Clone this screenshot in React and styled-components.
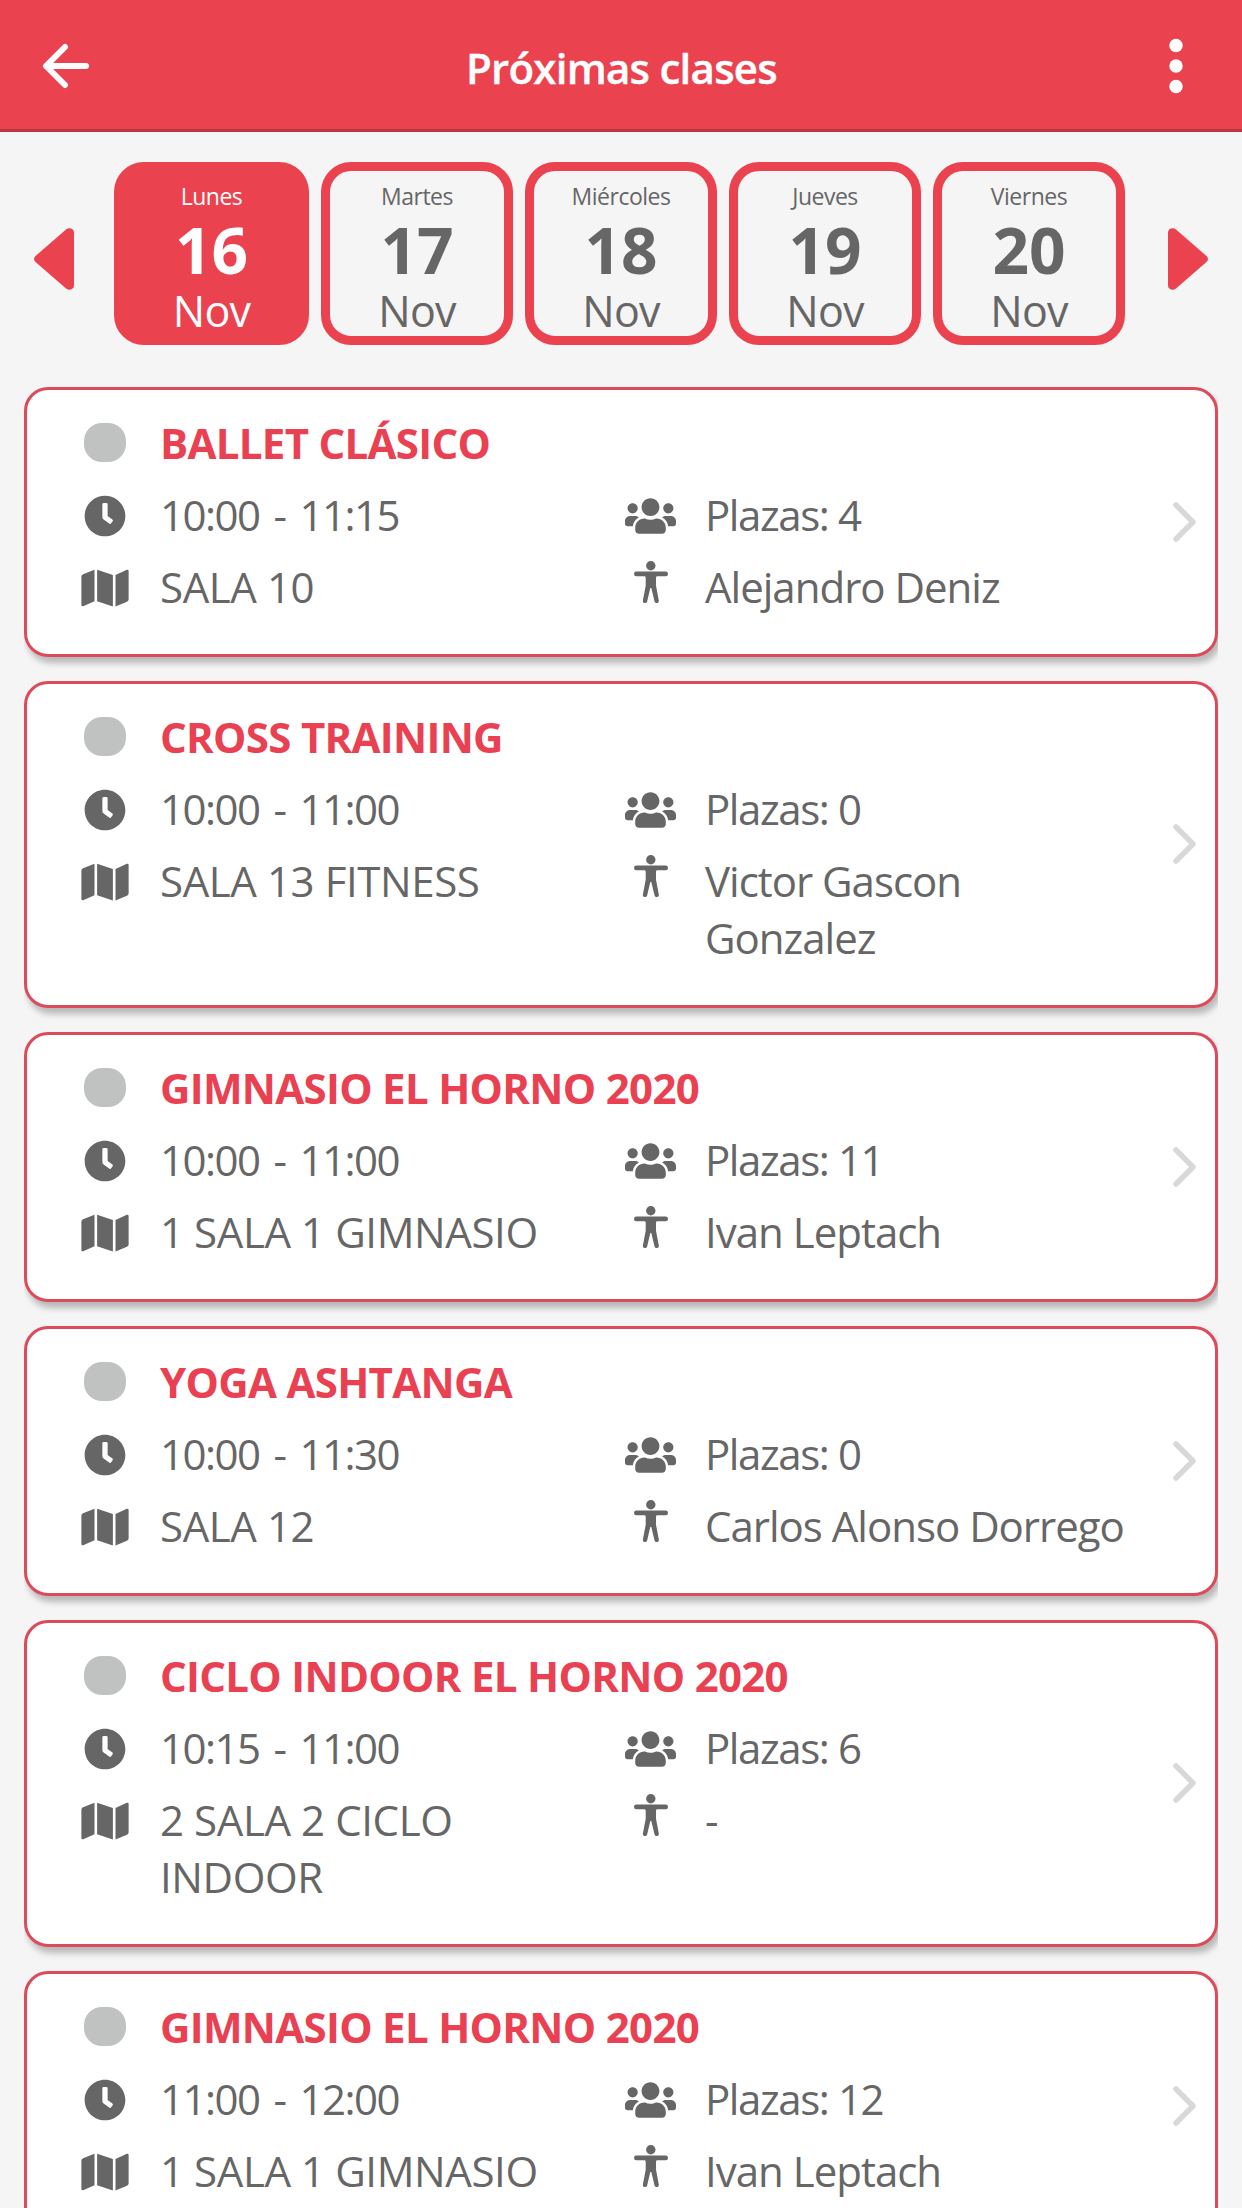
import React from 'react';
import styled, { createGlobalStyle } from 'styled-components';
import { FaClock, FaMap, FaUsers } from 'react-icons/fa';

const Global = createGlobalStyle`
  * { box-sizing: border-box; }
  body { margin: 0; background: #f5f5f5; height: 2208px; overflow: hidden; }
`;

const Screen = styled.main`
  width: 1242px;
  height: 2208px;
  overflow: hidden;
  background: #f5f5f5;
  color: #666;
  font-family: 'Open Sans', 'Noto Sans', sans-serif;
`;

const Header = styled.header`
  display: flex;
  align-items: center;
  height: 132px;
  padding: 3px 59px 0 42px;
  background: #eb4250;
  border-bottom: 3px solid #bd3443;
  color: #fff;
`;

const Title = styled.h1`
  flex: 1;
  margin: 3px 0 0;
  padding-right: 18px;
  font-size: 42px;
  font-weight: 600;
  line-height: 57px;
  letter-spacing: -0.75px;
  text-align: center;
  white-space: nowrap;
  -webkit-text-stroke: 0.4px #fff;
`;

const Week = styled.nav`
  display: flex;
  align-items: center;
  justify-content: space-between;
  height: 183px;
  margin: 30px 34px 42px;
`;

const Days = styled.div`
  display: flex;
  gap: 12px;
  height: 183px;
  padding-right: 3px;
`;

const Day = styled.button`
  display: flex;
  flex-direction: column;
  align-items: center;
  width: ${(p) => (p.$active ? 195 : 192)}px;
  height: 183px;
  padding: 7px 0 0;
  border: 9px solid #eb4250;
  border-radius: 30px;
  background: ${(p) => (p.$active ? '#eb4250' : 'transparent')};
  color: ${(p) => (p.$active ? '#fff' : '#666')};
  font-family: inherit;
`;

const DayName = styled.span`
  font-size: 23px;
  line-height: 36px;
  letter-spacing: -0.5px;
`;

const DayNumber = styled.span`
  font-size: 64px;
  font-weight: 700;
  line-height: 72px;
`;

const Month = styled.span`
  font-size: 43px;
  line-height: 50px;
  letter-spacing: -0.8px;
`;

const List = styled.section`
  display: flex;
  flex-direction: column;
  gap: 24px;
  margin: 0 24px;
  overflow-x: clip;
`;

const Card = styled.article`
  display: flex;
  align-items: center;
  justify-content: space-between;
  flex: none;
  padding: 24px 18px 39px 51px;
  border: 3px solid #dd4a5a;
  border-radius: 24px;
  background: #fff;
  box-shadow: 3px 6px 6px rgba(0, 0, 0, 0.25);
`;

const Info = styled.div`
  display: grid;
  grid-template-columns: 545px 530px;
  row-gap: 15px;
`;

const Field = styled.div`
  display: flex;
  grid-column: ${(p) => (p.$wide ? '1 / 3' : 'auto')};
`;

const IconSlot = styled.span`
  display: flex;
  align-items: center;
  justify-content: center;
  flex: none;
  width: 54px;
  height: 57px;
  margin-right: 28px;
  padding-top: ${(p) => p.$drop || 0}px;
  padding-bottom: ${(p) => p.$lift || 0}px;
  padding-left: ${(p) => p.$indent || 0}px;

  svg {
    flex: none;
    width: ${(p) => (p.$glyph ? `${p.$glyph}px` : 'auto')};
  }
`;

const Dot = styled.i`
  width: 42px;
  height: 39px;
  border-radius: 18px;
  background: #c0c2c1;
`;

const Label = styled.span`
  max-width: ${(p) => p.$max || 460}px;
  font-size: 42px;
  line-height: 57px;
  letter-spacing: ${(p) => p.$track || 0}px;
  word-spacing: ${(p) => p.$gap || 0}px;
`;

const ClassName = styled.h2`
  margin: 0;
  color: #e94151;
  font-size: 42px;
  font-weight: 700;
  line-height: 57px;
  letter-spacing: -0.7px;
`;

const ChevronIcon = styled.svg`
  flex: none;
  width: 24px;
  height: 42px;
  margin-top: 14px;
`;

const BackIcon = () => (
  <svg width="50" height="54" viewBox="0 0 50 54" fill="none" stroke="#fff" strokeWidth="6" strokeLinecap="round" strokeLinejoin="round">
    <path d="M23 8 4 27l19 19M5 27h39" />
  </svg>
);

const MoreIcon = () => (
  <svg width="14" height="66" viewBox="0 0 14 66" fill="#fff">
    <circle cx="7" cy="12.500" r="6.700" />
    <circle cx="7" cy="33" r="6.700" />
    <circle cx="7" cy="53.500" r="6.700" />
  </svg>
);

const Triangle = styled.svg`
  width: 40px;
  height: 62px;
  margin-top: 11px;
  transform: ${(p) => (p.$next ? 'scaleX(-1)' : 'none')};
`;

const WeekArrow = ({ next }) => (
  <Triangle $next={next} viewBox="0 0 40 62" fill="#eb4250">
    <path d="M40 4.500v53c0 4-5 5.500-8 3L1.500 34c-2-2-2-4 0-6L32 1.500c3-2.500 8-1 8 3Z" />
  </Triangle>
);

const BodyIcon = () => (
  <svg height="42" viewBox="0 0 34 42" fill="#666">
    <circle cx="16.800" cy="4.700" r="4.700" />
    <path d="M2.300 10.600h29.400a2.300 2.300 0 0 1 0 4.600h-8c-1.300 0-1.700.6-1.700 1.600v8l2.800 14.600c.5 3-3.700 3.700-4.300.9L17.300 27h-1l-3.100 13.300c-.6 2.800-4.800 2.100-4.300-.9L11.700 24.800v-8c0-1-.4-1.600-1.700-1.600H2.300a2.300 2.300 0 0 1 0-4.600Z" />
  </svg>
);

const Chevron = () => (
  <ChevronIcon viewBox="0 0 24 42" fill="none" stroke="#d8d8d8" strokeWidth="5.500" strokeLinecap="round" strokeLinejoin="round">
    <path d="m3 4 17 17L3 38" />
  </ChevronIcon>
);

const days = [
  ['Lunes', 16], ['Martes', 17], ['Miércoles', 18], ['Jueves', 19], ['Viernes', 20],
];

const classes = [
  { name: 'BALLET CLÁSICO', time: '10:00 - 11:15', room: 'SALA 10', places: 4, coach: 'Alejandro Deniz' },
  { name: 'CROSS TRAINING', time: '10:00 - 11:00', room: 'SALA 13 FITNESS', places: 0, coach: 'Victor Gascon Gonzalez' },
  { name: 'GIMNASIO EL HORNO 2020', time: '10:00 - 11:00', room: '1 SALA 1 GIMNASIO', places: 11, coach: 'Ivan Leptach' },
  { name: 'YOGA ASHTANGA', time: '10:00 - 11:30', room: 'SALA 12', places: 0, coach: 'Carlos Alonso Dorrego' },
  { name: 'CICLO INDOOR EL HORNO 2020', time: '10:15 - 11:00', room: '2 SALA 2 CICLO INDOOR', places: 6, coach: '-' },
  { name: 'GIMNASIO EL HORNO 2020', time: '11:00 - 12:00', room: '1 SALA 1 GIMNASIO', places: 12, coach: 'Ivan Leptach' },
];

const ClassCard = ({ item }) => (
  <Card>
    <Info>
      <Field $wide>
        <IconSlot><Dot /></IconSlot>
        <ClassName>{item.name}</ClassName>
      </Field>
      <Field>
        <IconSlot $drop={3} $glyph={42}><FaClock size={42} /></IconSlot>
        <Label $track={-1.5} $gap={4.5}>{item.time}</Label>
      </Field>
      <Field>
        <IconSlot $drop={3} $glyph={51}><FaUsers size={42} /></IconSlot>
        <Label $track={-1.4}>Plazas: {item.places}</Label>
      </Field>
      <Field>
        <IconSlot $drop={3} $glyph={48}><FaMap size={42} /></IconSlot>
        <Label $max={400} $track={-0.4}>{item.room}</Label>
      </Field>
      <Field>
        <IconSlot $lift={9} $indent={2} $glyph={34}><BodyIcon /></IconSlot>
        <Label $max={434} $track={-1}>{item.coach}</Label>
      </Field>
    </Info>
    <Chevron />
  </Card>
);

export default function App() {
  return (
    <Screen>
      <Global />
      <Header>
        <BackIcon />
        <Title>Próximas clases</Title>
        <MoreIcon />
      </Header>
      <Week>
        <WeekArrow />
        <Days>
          {days.map(([name, number], i) => (
            <Day key={number} $active={i === 0}>
              <DayName>{name}</DayName>
              <DayNumber>{number}</DayNumber>
              <Month>Nov</Month>
            </Day>
          ))}
        </Days>
        <WeekArrow next />
      </Week>
      <List>
        {classes.map((item, i) => <ClassCard key={i} item={item} />)}
      </List>
    </Screen>
  );
}
